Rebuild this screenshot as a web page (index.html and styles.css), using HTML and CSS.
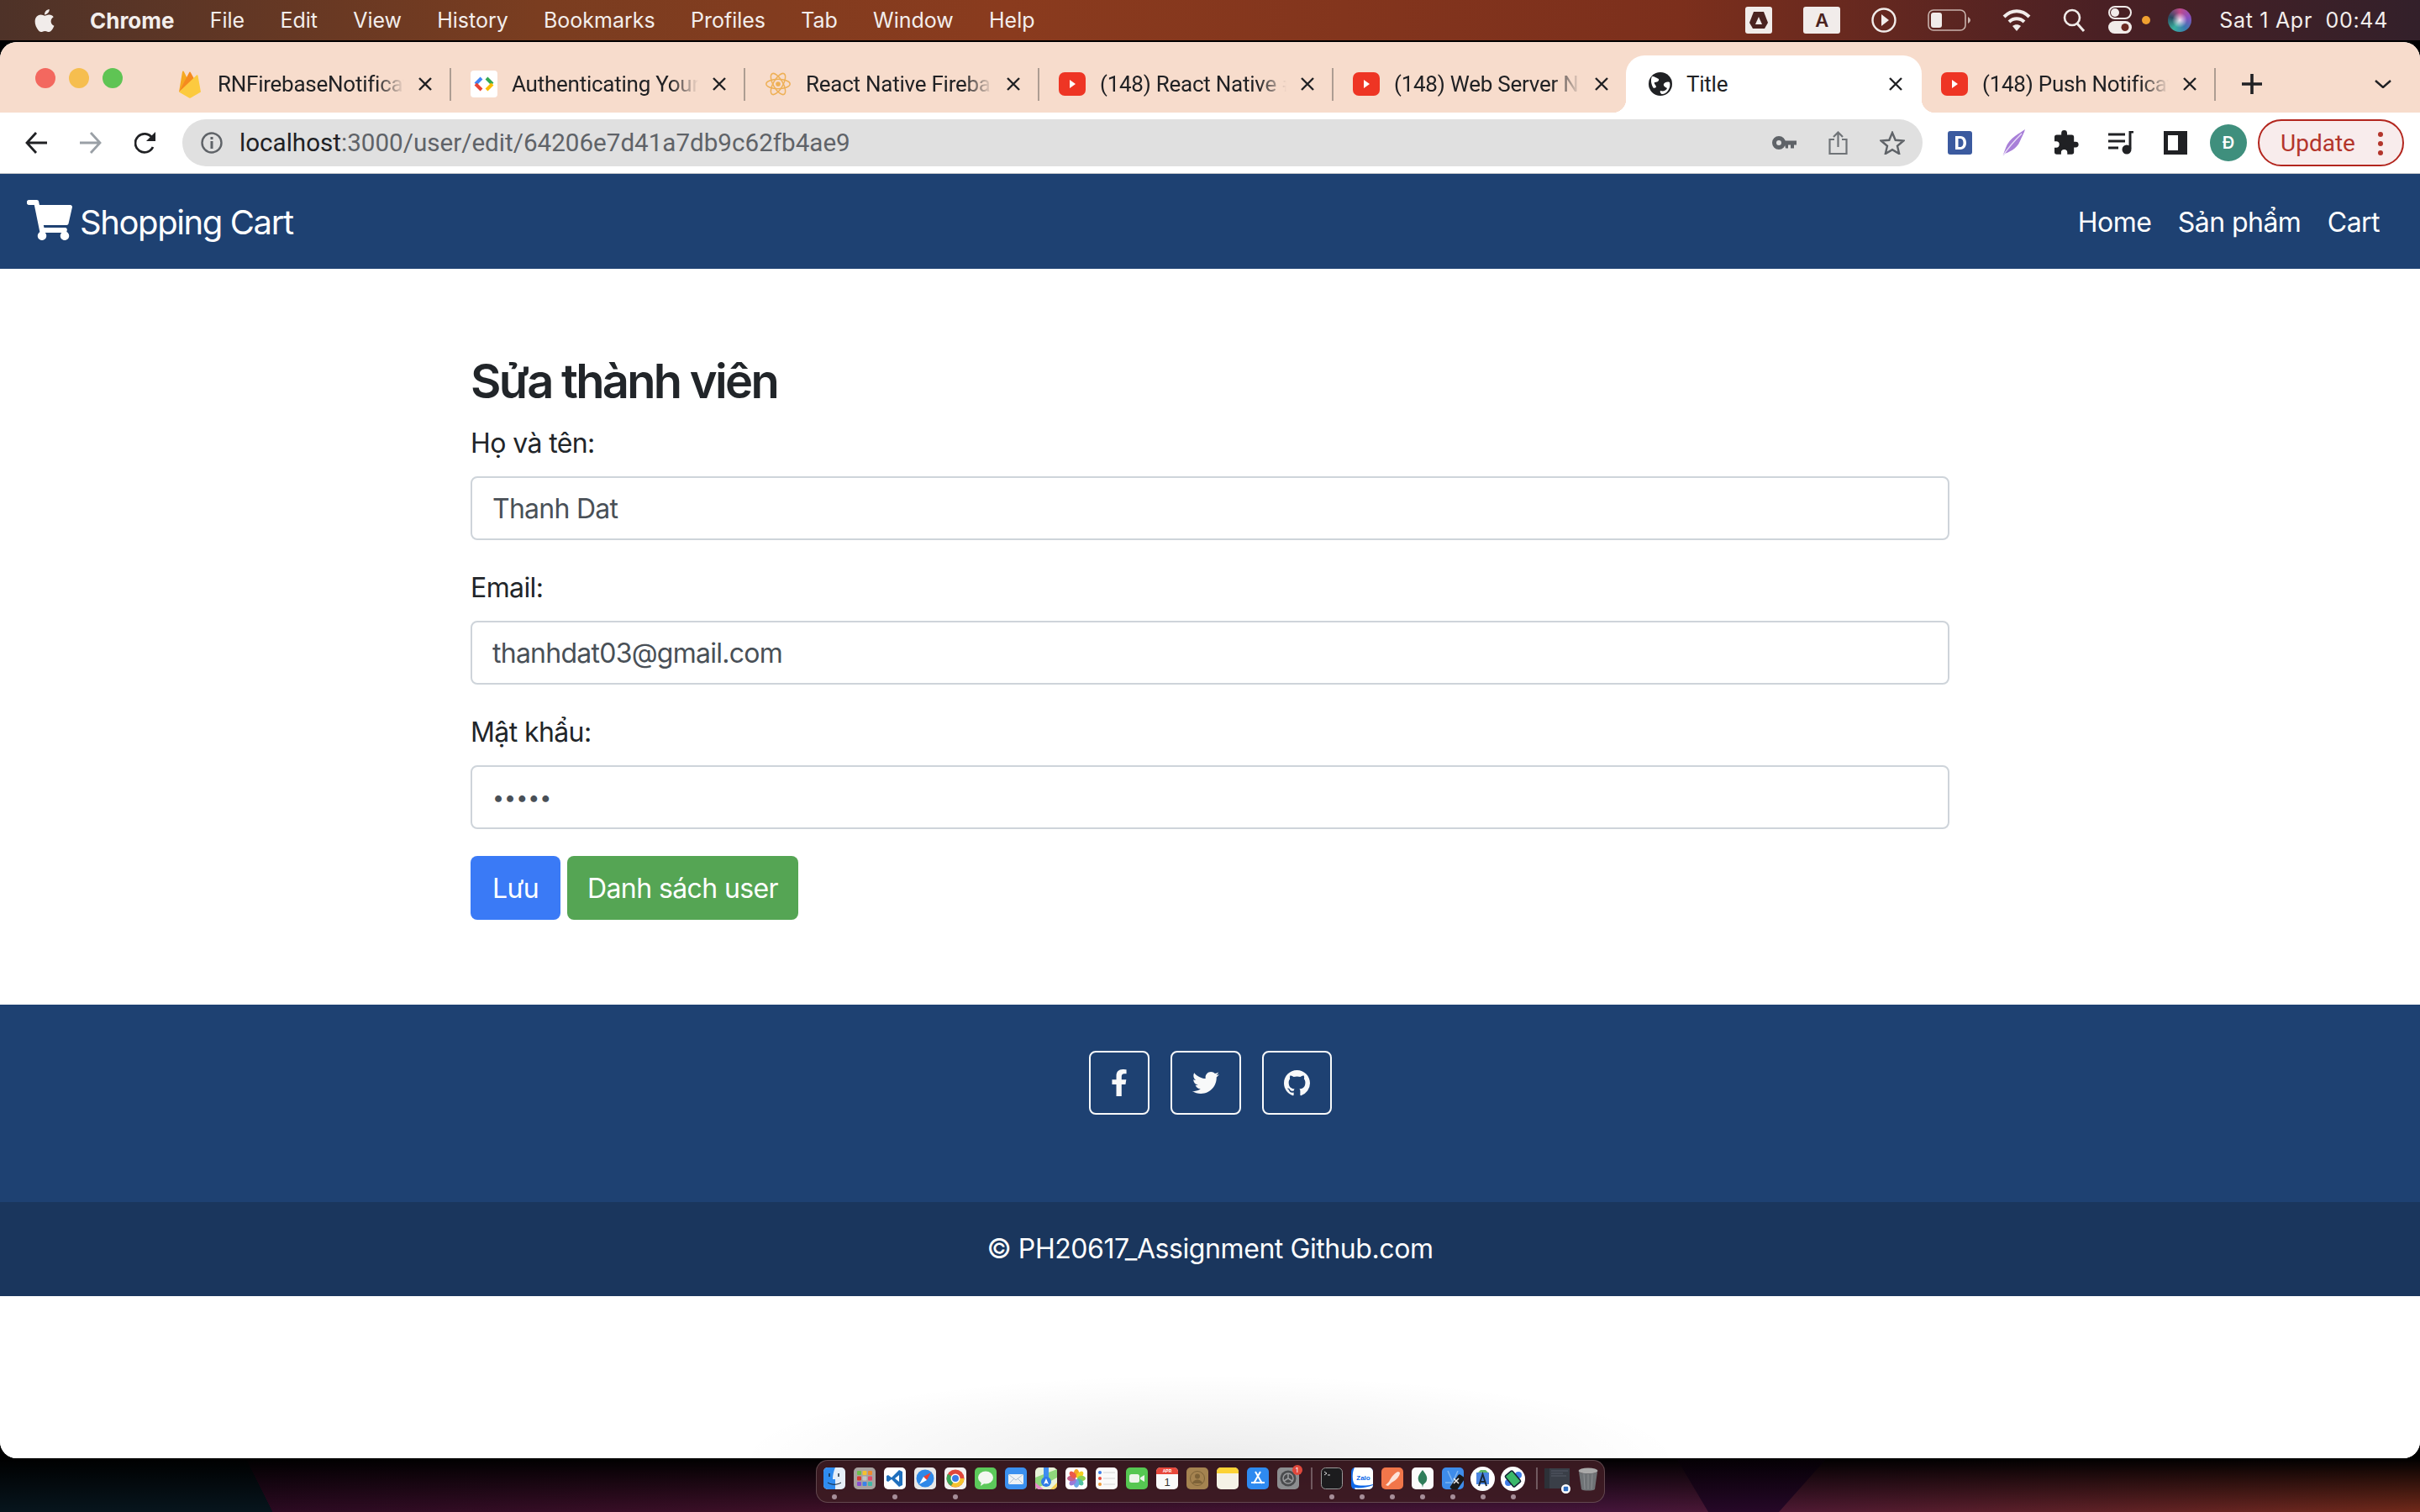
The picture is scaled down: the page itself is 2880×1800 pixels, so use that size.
FILE: index.html
```html
<!DOCTYPE html>
<html lang='vi'>
<head>
  <meta charset='UTF-8'>
  <title>Title</title>
  <link rel="stylesheet" href="styles.css">
</head>
<body>
  <svg class='sprites' width='0' height='0'>
    <symbol id='yt' viewBox='0 0 32 28'>
      <rect width='32' height='28' rx='7' fill='#ee3524'/>
      <path d='M13 9l7 5-7 5z' fill='#fff'/>
    </symbol>
    <symbol id='close' viewBox='0 0 18 18'>
      <path d='M2 2l14 14M16 2L2 16' stroke='#202124' stroke-width='2.4' fill='none'/>
    </symbol>
  </svg>

  <!-- mac menu bar -->
  <div class='menubar'>
    <svg class='apple' viewBox='0 0 384 512'><path fill='#f1ecea' d='M318.7 268.7c-.2-36.7 16.4-64.4 50-84.8-18.8-26.9-47.2-41.7-84.7-44.6-35.5-2.8-74.3 20.7-88.5 20.7-15 0-49.4-19.7-76.4-19.7C63.3 141.2 4 184.8 4 273.5q0 39.3 14.4 81.2c12.8 36.7 59 126.7 107.2 125.2 25.2-.6 43-17.9 75.8-17.9 31.8 0 48.3 17.9 76.4 17.9 48.6-.7 90.4-82.5 102.6-119.3-65.2-30.7-61.7-90-61.7-91.9zm-56.6-164.2c27.3-32.4 24.8-61.9 24-72.5-24.1 1.4-52 16.4-67.9 34.9-17.5 19.8-27.8 44.3-25.6 71.9 26.1 2 49.9-11.4 69.5-34.3z'/></svg>
    <div class='menu'>
      <span class='app-name'>Chrome</span>
      <span>File</span>
      <span>Edit</span>
      <span>View</span>
      <span>History</span>
      <span>Bookmarks</span>
      <span>Profiles</span>
      <span>Tab</span>
      <span>Window</span>
      <span>Help</span>
    </div>
    <div class='status'>
      <svg width='32' height='32' viewBox='0 0 32 32'><rect width='32' height='32' rx='3' fill='#f1ecea'/><path d='M10 6h12l5 13-4 7H9l-4-7z' fill='#4a2320'/><path d='M16 12l4 9h-8z' fill='#f1ecea'/></svg>
      <span class='tile'>A</span>
      <svg width='30' height='32' viewBox='0 0 30 32'><circle cx='15' cy='16' r='13.5' stroke='#f1ecea' stroke-width='2.4' fill='none'/><path d='M12 9l9 7-9 7z' fill='#f1ecea'/></svg>
      <svg width='51' height='26' viewBox='0 0 51 26'><rect x='1' y='1' width='44' height='24' rx='6' stroke='#c9b3ad' stroke-width='1.6' fill='none'/><rect x='4' y='4' width='13' height='18' rx='3' fill='#f1ecea'/><path d='M48 9c2 1 3 3 3 4s-1 3-3 4z' fill='#c9b3ad'/></svg>
      <svg width='36' height='30' viewBox='0 0 36 30'><path d='M3 11c9-9 21-9 30 0M9 17c5-5 13-5 18 0' stroke='#f1ecea' stroke-width='4' fill='none'/><path d='M13 22c3-2.500 7-2.500 10 0l-5 6z' fill='#f1ecea'/></svg>
      <svg class='tight' width='27' height='30' viewBox='0 0 27 30'><circle cx='11' cy='12' r='9' stroke='#f1ecea' stroke-width='2.600' fill='none'/><path d='M17 19l8 9' stroke='#f1ecea' stroke-width='3'/></svg>
      <div class='control'>
        <svg width='28' height='34' viewBox='0 0 28 34'><rect x='1' y='1' width='26' height='14' rx='7' stroke='#f1ecea' stroke-width='2' fill='none'/><circle cx='8' cy='8' r='5' fill='#f1ecea'/><rect y='18' width='28' height='15' rx='7.500' fill='#f1ecea'/><circle cx='20' cy='25.500' r='4.500' fill='#6a2a22'/></svg>
        <i class='mic-dot'></i>
      </div>
      <i class='siri'></i>
      <span class='clock'>Sat 1 Apr&nbsp; 00:44</span>
    </div>
  </div>

  <div class='window'>
    <!-- tabs -->
    <div class='tabstrip'>
      <div class='lights'><i class='red'></i><i class='yellow'></i><i class='green'></i></div>
      <div class='tab'>
        <svg class='tab-icon' viewBox='-3 0 32 33'><path d='M0 26L4 2c.3-1.500 1.500-1.500 2 0l5 10z' fill='#f6a821'/><path d='M0 26L12 3c.6-1.200 1.400-1.200 2 0l5 9z' fill='#f58a1f'/><path d='M0 26L21 6c.6-.6 1.300-.4 1.500.6L26 26l-12 7c-.6.300-1.400.300-2 0z' fill='#fcca3f'/></svg>
        <span class='tab-title'>RNFirebaseNotificat</span>
        <svg class='tab-close'><use href='#close'/></svg>
      </div>
      <div class='tab'>
        <svg class='tab-icon' viewBox='0 0 32 32'><rect width='32' height='32' rx='4' fill='#fff'/><path d='M13 9l-7 7' stroke='#4285f4' stroke-width='4' fill='none'/><path d='M6 16l7 7' stroke='#ea4335' stroke-width='4' fill='none'/><path d='M19 9l7 7' stroke='#34a853' stroke-width='4' fill='none'/><path d='M26 16l-7 7' stroke='#fbbc05' stroke-width='4' fill='none'/></svg>
        <span class='tab-title'>Authenticating Your</span>
        <svg class='tab-close'><use href='#close'/></svg>
      </div>
      <div class='tab'>
        <svg class='tab-icon' viewBox='0 0 32 36'><g stroke='#eeb056' stroke-width='1.600' fill='none'><ellipse cx='16' cy='18' rx='15' ry='6'/><ellipse cx='16' cy='18' rx='15' ry='6' transform='rotate(60 16 18)'/><ellipse cx='16' cy='18' rx='15' ry='6' transform='rotate(120 16 18)'/></g><circle cx='16' cy='18' r='3' fill='#eeb056'/></svg>
        <span class='tab-title'>React Native Fireba</span>
        <svg class='tab-close'><use href='#close'/></svg>
      </div>
      <div class='tab'>
        <svg class='tab-icon'><use href='#yt'/></svg>
        <span class='tab-title'>(148) React Native #</span>
        <svg class='tab-close'><use href='#close'/></svg>
      </div>
      <div class='tab no-sep'>
        <svg class='tab-icon'><use href='#yt'/></svg>
        <span class='tab-title'>(148) Web Server N</span>
        <svg class='tab-close'><use href='#close'/></svg>
      </div>
      <div class='tab active'>
        <svg class='tab-icon' viewBox='0 0 28 28'><circle cx='14' cy='14' r='14' fill='#202124'/><path d='M4 5c4 0 5 2 8 3 1 3-3 4-5 4-1 2 2 3 2 6l-3 1C3 15 2 9 4 5zM25 12c-3-1-6 0-7 2s2 4 4 5c-1 3-5 4-8 3-1 2 1 4 2 4 6 0 11-8 9-14z' fill='#fff'/></svg>
        <span class='tab-title'>Title</span>
        <svg class='tab-close'><use href='#close'/></svg>
      </div>
      <div class='tab'>
        <svg class='tab-icon'><use href='#yt'/></svg>
        <span class='tab-title'>(148) Push Notificat</span>
        <svg class='tab-close'><use href='#close'/></svg>
      </div>
      <svg class='new-tab' viewBox='0 0 24 24'><path d='M12 0v24M0 12h24' stroke='#202124' stroke-width='3.600'/></svg>
      <svg class='tab-list' viewBox='0 0 20 10'><path d='M1 1l9 8 9-8' stroke='#202124' stroke-width='2.400' fill='none'/></svg>
    </div>

    <!-- toolbar -->
    <div class='toolbar'>
      <svg class='tool' viewBox='0 0 26 28'><path d='M26 14H3M13 2L2 14l11 12' stroke='#202124' stroke-width='2.800' fill='none'/></svg>
      <svg class='tool' viewBox='0 0 26 28'><path d='M0 14h23M13 2l11 12-11 12' stroke='#9aa0a6' stroke-width='2.800' fill='none'/></svg>
      <svg class='tool' viewBox='0 0 26 28'><path d='M22 19a11 11 0 1 1-1-11' stroke='#202124' stroke-width='2.800' fill='none'/><path d='M25 1v11H14z' fill='#202124'/></svg>
      <div class='omnibox'>
        <svg class='info' viewBox='0 0 26 26'><circle cx='13' cy='13' r='11.500' stroke='#5f6368' stroke-width='2.400' fill='none'/><rect x='11.500' y='11' width='3' height='9' fill='#5f6368'/><rect x='11.500' y='6' width='3' height='3' fill='#5f6368'/></svg>
        <span class='url'><b>localhost</b>:3000/user/edit/64206e7d41a7db9c62fb4ae9</span>
        <div class='omni-actions'>
          <svg width='29' height='16' viewBox='0 0 29 16'><circle cx='8' cy='8' r='5.500' stroke='#5f6368' stroke-width='5' fill='none'/><path d='M14 5.500h15v5h-3v4h-4v-4h-3v4h-3z' fill='#5f6368'/></svg>
          <svg width='23' height='28' viewBox='0 0 23 28'><path d='M7 10H1.500v17h20V10H16M11.500 19V2M6 7l5.500-5.500L17 7' stroke='#6f7377' stroke-width='2.200' fill='none'/></svg>
          <svg width='30' height='28' viewBox='0 0 30 28'><path d='M15 2l3.700 8.800 9.500.8-7.200 6.200 2.200 9.300L15 22.200l-8.200 4.900L9 17.800 1.800 11.600l9.500-.8z' stroke='#5f6368' stroke-width='2.400' fill='none'/></svg>
        </div>
      </div>
      <div class='extensions'>
        <svg width='29' height='28' viewBox='0 0 29 28'><rect width='29' height='28' rx='3' fill='#3b5a9f'/><path d='M9 6h6c5 0 7 4 7 8s-2 8-7 8H9zM12.500 9v10H15c2.500 0 3.500-2.500 3.500-5s-1-5-3.500-5z' fill='#fff'/></svg>
        <svg width='30' height='32' viewBox='0 0 30 32'><path d='M29 0C24 4 10 10 6 22l-3 8c6-3 16-6 20-16 2-5 5-10 6-14z' fill='#a87fd8'/><path d='M25 5C18 12 10 20 3 31' stroke='#e8dcf7' stroke-width='1.400' fill='none'/></svg>
        <svg width='30' height='30' viewBox='2 1 22 22'><path fill='#202124' d='M20.500 11H19V7a2 2 0 0 0-2-2h-4V3.500a2.500 2.500 0 0 0-5 0V5H4a2 2 0 0 0-2 2v3.800h1.500a2.700 2.700 0 0 1 0 5.400H2V20a2 2 0 0 0 2 2h3.800v-1.500a2.700 2.700 0 0 1 5.400 0V22H17a2 2 0 0 0 2-2v-4h1.500a2.500 2.500 0 0 0 0-5z'/></svg>
        <svg width='32' height='28' viewBox='0 0 32 28'><path d='M0 4h20M0 12h20M0 20h12' stroke='#202124' stroke-width='3'/><path d='M30 1h-4v20' stroke='#202124' stroke-width='3' fill='none'/><circle cx='22' cy='22' r='5.500' fill='#202124'/></svg>
        <svg width='28' height='28' viewBox='0 0 28 28'><rect width='28' height='28' fill='#202124'/><rect x='5' y='5' width='12' height='18' fill='#fff'/></svg>
        <span class='avatar'>Đ</span>
        <div class='update'>
          <span>Update</span>
          <i class='kebab'></i>
        </div>
      </div>
    </div>

    <div class='page'>
      <nav class='navbar'>
        <a class='brand'>
          <svg class='cart' viewBox='0 0 576 512'><path fill='#fff' d='M528.12 301.319l47.273-208C578.806 78.301 567.391 64 551.99 64H159.208l-9.166-44.81C147.758 8.021 137.93 0 126.529 0H24C10.745 0 0 10.745 0 24v16c0 13.255 10.745 24 24 24h69.883l70.248 343.435C147.325 417.1 136 435.222 136 456c0 30.928 25.072 56 56 56s56-25.072 56-56c0-15.674-6.447-29.835-16.824-40h209.647C430.447 426.165 424 440.326 424 456c0 30.928 25.072 56 56 56s56-25.072 56-56c0-22.172-12.888-41.332-31.579-50.405l5.517-24.276c3.413-15.018-8.002-29.319-23.403-29.319H218.117l-6.545-32h293.145c11.206 0 20.92-7.754 23.403-18.681z'/></svg>
          Shopping Cart
        </a>
        <div class='nav-links'>
          <a>Home</a>
          <a>Sản phẩm</a>
          <a>Cart</a>
        </div>
      </nav>

      <main class='container'>
        <h2>Sửa thành viên</h2>
        <form class='user-form'>
          <div class='form-group'>
            <label for='name'>Họ và tên:</label>
            <input id='name' type='text' value='Thanh Dat'>
          </div>
          <div class='form-group'>
            <label for='email'>Email:</label>
            <input id='email' type='text' value='thanhdat03@gmail.com'>
          </div>
          <div class='form-group'>
            <label for='password'>Mật khẩu:</label>
            <input id='password' class='password' type='password' value='12345'>
          </div>
          <div class='form-buttons'>
            <button class='btn btn-save' type='button'>Lưu</button>
            <button class='btn btn-list' type='button'>Danh sách user</button>
          </div>
        </form>
      </main>

      <footer class='footer'>
        <div class='socials'>
          <a class='social'><svg width='20' height='32' viewBox='0 0 320 512'><path fill='#f8f9fa' d='M279.14 288l14.22-92.66h-88.91v-60.13c0-25.35 12.42-50.06 52.24-50.06h40.42V6.26S260.43 0 225.36 0c-73.22 0-121.08 44.38-121.08 124.72v70.62H22.89V288h81.39v224h100.17V288z'/></svg></a>
          <a class='social'><svg width='32' height='32' viewBox='0 0 512 512'><path fill='#f8f9fa' d='M459.37 151.716c.325 4.548.325 9.097.325 13.645 0 138.72-105.583 298.558-298.558 298.558-59.452 0-114.68-17.219-161.137-47.106 8.447.974 16.568 1.299 25.34 1.299 49.055 0 94.213-16.568 130.274-44.832-46.132-.975-84.792-31.188-98.112-72.772 6.498.974 12.995 1.624 19.818 1.624 9.421 0 18.843-1.3 27.614-3.573-48.081-9.747-84.143-51.98-84.143-102.985v-1.299c13.969 7.797 30.214 12.67 47.431 13.319-28.264-18.843-46.781-51.005-46.781-87.391 0-19.492 5.197-37.36 14.294-52.954 51.655 63.675 129.3 105.258 216.365 109.807-1.624-7.797-2.599-15.918-2.599-24.04 0-57.828 46.782-104.934 104.934-104.934 30.213 0 57.502 12.67 76.67 33.137 23.715-4.548 46.456-13.32 66.599-25.34-7.798 24.366-24.366 44.833-46.132 57.827 21.117-2.273 41.584-8.122 60.426-16.243-14.292 20.791-32.161 39.308-52.628 54.253z'/></svg></a>
          <a class='social'><svg width='31' height='31' viewBox='0 0 16 16'><path fill='#f8f9fa' d='M8 0C3.58 0 0 3.58 0 8c0 3.54 2.29 6.53 5.47 7.59.4.07.55-.17.55-.38 0-.19-.01-.82-.01-1.49-2.01.37-2.53-.49-2.69-.94-.09-.23-.48-.94-.82-1.13-.28-.15-.68-.52-.01-.53.63-.01 1.08.58 1.23.82.72 1.21 1.87.87 2.33.66.07-.52.28-.87.51-1.07-1.78-.2-3.64-.89-3.64-3.95 0-.87.31-1.59.82-2.15-.08-.2-.36-1.02.08-2.12 0 0 .67-.21 2.2.82.64-.18 1.32-.27 2-.27.68 0 1.36.09 2 .27 1.53-1.04 2.2-.82 2.2-.82.44 1.1.16 1.92.08 2.12.51.56.82 1.27.82 2.15 0 3.07-1.87 3.75-3.65 3.95.29.25.54.73.54 1.48 0 1.07-.01 1.93-.01 2.2 0 .21.15.46.55.38A8.013 8.013 0 0016 8c0-4.42-3.58-8-8-8z'/></svg></a>
        </div>
        <div class='copyright'>© PH20617_Assignment Github.com</div>
      </footer>
    </div>
  </div>

  <!-- dock -->
  <div class='dock'>
    <div class='dock-item on'><svg viewBox='0 0 26 26'><rect width='26' height='26' rx='5' fill='#e6eef8'/><path d='M5 0h9c-2 5-3 9-3 14h3v12H5a5 5 0 0 1-5-5V5a5 5 0 0 1 5-5z' fill='#2f8cf0'/><path d='M7 7v4M18 7v4' stroke='#123' stroke-width='1.400'/><path d='M5 18c5 3 11 3 16 0' stroke='#123' stroke-width='1' fill='none'/></svg></div>
    <div class='dock-item'><svg viewBox='0 0 26 26'><rect width='26' height='26' rx='5' fill='#a8a3a0'/><g><rect x='4' y='4' width='5' height='5' rx='1' fill='#6bc04b'/><rect x='10.500' y='4' width='5' height='5' rx='1' fill='#f5c02e'/><rect x='17' y='4' width='5' height='5' rx='1' fill='#ef8a2e'/><rect x='4' y='10.500' width='5' height='5' rx='1' fill='#d83a30'/><rect x='10.500' y='10.500' width='5' height='5' rx='1' fill='#bfc3c6'/><rect x='17' y='10.500' width='5' height='5' rx='1' fill='#e24a6a'/><rect x='4' y='17' width='5' height='5' rx='1' fill='#8a4fd0'/><rect x='10.500' y='17' width='5' height='5' rx='1' fill='#3a82ea'/><rect x='17' y='17' width='5' height='5' rx='1' fill='#42b8a8'/></g></svg></div>
    <div class='dock-item on'><svg viewBox='0 0 26 26'><rect width='26' height='26' rx='5' fill='#fff'/><path d='M18 3l4 2v16l-4 2-9-9-4 3-2-1v-6l2-1 4 3zm0 6l-5 4 5 4z' fill='#1f6fbd'/></svg></div>
    <div class='dock-item'><svg viewBox='0 0 26 26'><rect width='26' height='26' rx='5' fill='#e8e8e8'/><circle cx='13' cy='13' r='10.500' fill='#2f88e8'/><path d='M20 6l-9 5 4 4z' fill='#f04030'/><path d='M6 20l5-9 4 4z' fill='#fff'/></svg></div>
    <div class='dock-item on'><svg viewBox='0 0 26 26'><rect width='26' height='26' rx='5' fill='#f2f2f2'/><circle cx='13' cy='13' r='10.500' fill='#e0483c'/><path d='M13 13L23.500 13a10.500 10.500 0 0 1-15.700 9.100z' fill='#f5c330'/><path d='M13 13L7.800 22.100A10.500 10.500 0 0 1 4 7.700z' fill='#3aa757'/><circle cx='13' cy='13' r='5.500' fill='#fff'/><circle cx='13' cy='13' r='4' fill='#3b7de8'/></svg></div>
    <div class='dock-item'><svg viewBox='0 0 26 26'><rect width='26' height='26' rx='5' fill='#5cc95a'/><ellipse cx='13' cy='12' rx='9' ry='7.500' fill='#f2f7f0'/><path d='M8 17l-1 5 6-4z' fill='#f2f7f0'/></svg></div>
    <div class='dock-item'><svg viewBox='0 0 26 26'><rect width='26' height='26' rx='5' fill='#3b90f0'/><rect x='4' y='8' width='18' height='12' rx='1' fill='#eef2f6'/><path d='M4 8l9 7 9-7M4 20l7-7M22 20l-7-7' stroke='#9fb3c8' stroke-width='.8' fill='none'/></svg></div>
    <div class='dock-item'><svg viewBox='0 0 26 26'><rect width='26' height='26' rx='5' fill='#e9f3d8'/><path d='M0 12l26-10v10L0 26z' fill='#8fd67c'/><path d='M0 18l10 8H5a5 5 0 0 1-5-5z' fill='#e888c8'/><path d='M18 26l8-8v3a5 5 0 0 1-5 5z' fill='#f5cf50'/><rect x='10' y='0' width='6' height='14' fill='#3f8df0'/><circle cx='13' cy='17' r='6' fill='#2f7de8'/><path d='M13 13l3 7-3-1.500-3 1.500z' fill='#fff'/></svg></div>
    <div class='dock-item'><svg viewBox='0 0 26 26'><rect width='26' height='26' rx='5' fill='#fff'/><g transform='translate(13 13)'><ellipse cy='-6' rx='3.200' ry='5' fill='#f5a623'/><ellipse cy='-6' rx='3.200' ry='5' fill='#f5d020' transform='rotate(45)'/><ellipse cy='-6' rx='3.200' ry='5' fill='#8fcf50' transform='rotate(90)'/><ellipse cy='-6' rx='3.200' ry='5' fill='#50c0a0' transform='rotate(135)'/><ellipse cy='-6' rx='3.200' ry='5' fill='#6aa8e8' transform='rotate(180)'/><ellipse cy='-6' rx='3.200' ry='5' fill='#9a7ad8' transform='rotate(225)'/><ellipse cy='-6' rx='3.200' ry='5' fill='#c8608a' transform='rotate(270)'/><ellipse cy='-6' rx='3.200' ry='5' fill='#ec5a4a' transform='rotate(315)'/></g></svg></div>
    <div class='dock-item'><svg viewBox='0 0 26 26'><rect width='26' height='26' rx='5' fill='#fafafa'/><circle cx='5' cy='6' r='2' fill='#3b7de8'/><circle cx='5' cy='13' r='2' fill='#e8483c'/><circle cx='5' cy='20' r='2' fill='#ef9a3a'/><path d='M9 6h14M9 13h14M9 20h14' stroke='#ccc' stroke-width='.8'/></svg></div>
    <div class='dock-item'><svg viewBox='0 0 26 26'><rect width='26' height='26' rx='5' fill='#56c752'/><rect x='4' y='8' width='12' height='10' rx='2.500' fill='#eef5ec'/><path d='M17 12l5-3v8l-5-3z' fill='#eef5ec'/></svg></div>
    <div class='dock-item'><svg viewBox='0 0 26 26'><rect width='26' height='26' rx='5' fill='#fafafa'/><path d='M0 8V5a5 5 0 0 1 5-5h16a5 5 0 0 1 5 5v3z' fill='#e8483c'/><text x='13' y='6' class='cal-month'>APR</text><text x='13' y='22' class='cal-day'>1</text></svg></div>
    <div class='dock-item'><svg viewBox='0 0 26 26'><rect width='26' height='26' rx='5' fill='#a58350'/><circle cx='13' cy='13' r='8.500' stroke='#7d6238' stroke-width='1' fill='none'/><circle cx='13' cy='10.500' r='3' fill='#7d6238'/><path d='M7 19c1-6 11-6 12 0z' fill='#7d6238'/></svg></div>
    <div class='dock-item'><svg viewBox='0 0 26 26'><rect width='26' height='26' rx='5' fill='#f5f2e6'/><path d='M0 7V5a5 5 0 0 1 5-5h16a5 5 0 0 1 5 5v2z' fill='#fcd234'/></svg></div>
    <div class='dock-item'><svg viewBox='0 0 26 26'><rect width='26' height='26' rx='5' fill='#2e8af0'/><path d='M16 5L8 19M10 5l8 14M5 18h16' stroke='#fff' stroke-width='2' fill='none'/></svg></div>
    <div class='dock-item'><svg viewBox='0 0 26 26'><rect width='26' height='26' rx='5' fill='#8c8e90'/><circle cx='13' cy='13' r='9.500' fill='#4a4c4e'/><circle cx='13' cy='13' r='6' stroke='#9a9c9e' stroke-width='1.500' fill='none'/><path d='M13 13V7M13 13l5 3M13 13l-5 3' stroke='#9a9c9e' stroke-width='1.500'/></svg><span class='dock-badge'>1</span></div>
    <i class='dock-sep'></i>
    <div class='dock-item on'><svg viewBox='0 0 26 26'><rect x='.5' y='.5' width='25' height='25' rx='5' fill='#1c1c1e' stroke='#9a9a9a'/><path d='M4 5l3 2-3 2M8 9h3' stroke='#eee' stroke-width='.9' fill='none'/></svg></div>
    <div class='dock-item on'><svg viewBox='0 0 26 26'><rect width='26' height='26' rx='5' fill='#0f68e8'/><path d='M4 0h17a5 5 0 0 1 5 5v16a5 5 0 0 1-5 5H5l-1-2c5 1 15 0 22-3V20c-8 2-17 2-22 0C1 16 1 5 4 0z' fill='#fff'/><text x='14.500' y='15' class='zalo'>Zalo</text></svg></div>
    <div class='dock-item on'><svg viewBox='0 0 26 26'><rect width='26' height='26' rx='5' fill='#f1764a'/><path d='M20 5c-4 1-8 6-11 12l-4 4 3 1 4-4c6-3 10-8 10-12z' fill='#fde3d8'/></svg></div>
    <div class='dock-item on'><svg viewBox='0 0 26 26'><rect width='26' height='26' rx='5' fill='#fbfbfb'/><path d='M13 3c4 5 6 8 5 12-.6 3-3 4-4.300 5.500L13 24l-.7-3.500C11 19 8.600 18 8 15 7 11 9 8 13 3z' fill='#2f7d5a'/></svg></div>
    <div class='dock-item on'><svg viewBox='0 0 26 26'><rect width='26' height='26' rx='5' fill='#3e8cea'/><path d='M7 4l8 18M19 4l-8 18M4 18h18' stroke='#7fb6f2' stroke-width='1.500'/><rect x='14' y='8' width='9' height='20' rx='2' fill='#1a1a1a' transform='rotate(35 18 18)'/><path d='M14 13l6 6M20 13l-6 6' stroke='#eee' stroke-width='1.500'/></svg></div>
    <div class='dock-item on wide'><svg viewBox='0 0 29 29'><circle cx='14.500' cy='14.500' r='14.500' fill='#fff'/><rect x='7' y='7' width='15' height='14' fill='#4a85e0'/><path d='M9 7l3-3h6l3 3z' fill='#5fb96a'/><path d='M10 23l4.500-14L19 23M12 18h5' stroke='#1a2a3a' stroke-width='2' fill='none'/></svg></div>
    <div class='dock-item on wide'><svg viewBox='0 0 29 29'><circle cx='14.500' cy='14.500' r='14.500' fill='#fff'/><circle cx='9' cy='19' r='4' fill='#3f7de8'/><circle cx='21' cy='10' r='4' fill='#3f7de8'/><rect x='9' y='6' width='11' height='17' rx='1.500' fill='#3ab86a' stroke='#123' stroke-width='1.500' transform='rotate(-40 14.500 14.500)'/></svg></div>
    <i class='dock-sep'></i>
    <div class='dock-thumb'><svg width='30' height='24' viewBox='0 0 30 24'><rect width='30' height='24' fill='#3a3f48'/><rect width='6' height='24' fill='#2d3138'/><path d='M8 3h20M8 6h14M8 9h18' stroke='#555b66'/></svg><svg class='thumb-badge' viewBox='0 0 12 12'><circle cx='6' cy='6' r='6' fill='#fff'/><rect x='3' y='3' width='6' height='6' rx='1' fill='#2f6fc0'/></svg></div>
    <div class='dock-trash'><svg width='24' height='28' viewBox='0 0 24 28'><ellipse cx='12' cy='4' rx='11.500' ry='3.500' fill='#a9a9a9'/><path d='M1 5l3 21c2 2 14 2 16 0l3-21c-4 3-18 3-22 0z' fill='#6f7376'/><path d='M7 8l1 18M12 8v18M17 8l-1 18' stroke='#94979a' stroke-width='.8'/></svg></div>
  </div>
  <i class='wedge'></i>
</body>
</html>
```

FILE: styles.css
```css
* {
  box-sizing: border-box;
}

html, body {
  margin: 0;
  height: 1800px;
  overflow: hidden;
}

body {
  position: relative;
  font-family: Inter, "Noto Sans", sans-serif;
  color: #212529;
  background:
    linear-gradient(to bottom, #000 1736px, rgba(0, 0, 0, 0) 1800px),
    linear-gradient(63.4deg, #07151d 290px, #2c0a22 290px, #3e1028 858px, #45153a 1716px, #70291a 2574px);
}

.sprites {
  position: absolute;
}

/* menu bar */
.menubar {
  height: 48px;
  display: flex;
  align-items: center;
  padding: 0 38px 0 40px;
  color: #f3eeec;
  font-size: 25px;
  background: linear-gradient(to right, #4e3228 0, #7a3d20 640px, #8a3b1e 1200px, #7c2f1c 2000px, #4a2024 2500px, #33202a 2880px);
}

.apple {
  width: 26px;
  height: 31px;
  margin-right: 41px;
}

.menu {
  display: flex;
  gap: 42.200px;
}

.app-name {
  font-size: 26px;
  font-weight: 700;
}

.status {
  margin-left: auto;
  display: flex;
  align-items: center;
  gap: 37px;
}

.tile {
  width: 44px;
  height: 32px;
  border-radius: 3px;
  background: #f1ecea;
  color: #4a2320;
  font-size: 22px;
  font-weight: 600;
  text-align: center;
  line-height: 32px;
}

.tight {
  margin-right: -10px;
}

.control {
  display: flex;
  align-items: center;
  gap: 12px;
}

.mic-dot {
  width: 10px;
  height: 10px;
  border-radius: 50%;
  background: #f0a030;
}

.siri {
  width: 28px;
  height: 28px;
  margin-left: -16px;
  border-radius: 50%;
  background:
    radial-gradient(circle, #f0e0f0 0, rgba(240, 224, 240, 0) 45%),
    conic-gradient(#c04a8a, #8a4fc0, #3a7ab0, #3ab0a0, #2a4a60, #c04a8a);
}

.clock {
  margin-left: -4px;
  letter-spacing: 0.700px;
}

/* browser window */
.window {
  position: relative;
  margin-top: 2px;
  height: 1686px;
  border-radius: 20px;
  overflow: hidden;
  display: flex;
  flex-direction: column;
  background: #fff;
}

/* shadow the dock drops on the window */
.window::after {
  content: '';
  position: absolute;
  left: 880px;
  width: 1120px;
  bottom: -100px;
  height: 200px;
  background: radial-gradient(closest-side, rgba(0, 0, 0, 0.075), rgba(0, 0, 0, 0));
  pointer-events: none;
}

.tabstrip {
  height: 84px;
  flex: none;
  display: flex;
  align-items: flex-end;
  padding-left: 187px;
  position: relative;
  background: #f7dccc;
}

.lights {
  position: absolute;
  left: 42px;
  top: 31px;
  display: flex;
  gap: 16px;
}

.lights i {
  width: 24px;
  height: 24px;
  border-radius: 50%;
}

.lights .red { background: #f3685f; }
.lights .yellow { background: #f6be4f; }
.lights .green { background: #5fc454; }

.tab {
  position: relative;
  width: 350px;
  height: 68px;
  display: flex;
  align-items: center;
  padding: 0 0 0 23px;
}

.tab::before {
  content: '';
  position: absolute;
  right: 0;
  top: 15px;
  height: 39px;
  width: 2px;
  background: #ad9d92;
}

.tab.no-sep::before,
.tab.active::before {
  display: none;
}

.tab-icon {
  width: 32px;
  height: 34px;
  flex: none;
}

.tab-title {
  margin-left: 17px;
  width: 222px;
  flex: none;
  white-space: nowrap;
  font-family: Roboto, sans-serif;
  font-size: 26px;
  letter-spacing: -0.250px;
  color: #202124;
  -webkit-mask-image: linear-gradient(to right, #000 85%, transparent);
  mask-image: linear-gradient(to right, #000 85%, transparent);
}

.tab-close {
  width: 18px;
  height: 18px;
  margin-left: 16px;
  flex: none;
}

.tab.active {
  width: 352px;
  margin-left: -2px;
  padding-left: 27px;
  background: #fff;
  border-radius: 22px 22px 0 0;
  z-index: 1;
}

.tab.active .tab-icon {
  width: 28px;
  height: 28px;
}

.tab.active .tab-title {
  -webkit-mask-image: none;
  mask-image: none;
}

.tab.active .tab-close {
  margin-left: 18px;
}

/* the curved feet of the active tab */
.tab.active::after {
  content: '';
  position: absolute;
  left: -16px;
  right: -16px;
  bottom: 0;
  height: 16px;
  z-index: -1;
  background:
    radial-gradient(circle at 0 0, #f7dccc 16px, #fff 16.500px) left / 16px 16px no-repeat,
    radial-gradient(circle at 100% 0, #f7dccc 16px, #fff 16.500px) right / 16px 16px no-repeat;
}

.new-tab {
  width: 24px;
  height: 24px;
  margin: 0 0 22px 31px;
}

.tab-list {
  width: 20px;
  height: 10px;
  margin: 0 0 29px 134px;
}

.toolbar {
  height: 73px;
  flex: none;
  display: flex;
  align-items: center;
  gap: 39px;
  padding: 0 17px 1px 30px;
  background: #fff;
  border-bottom: 1px solid #c6c9cc;
}

.tool {
  width: 26px;
  height: 28px;
  flex: none;
}

.omnibox {
  width: 2071px;
  height: 56px;
  margin-left: -8px;
  flex: none;
  display: flex;
  align-items: center;
  padding: 0 21px 0 22px;
  border-radius: 28px;
  background: #e0e0e0;
}

.info {
  width: 26px;
  height: 26px;
}

.url {
  margin-left: 20px;
  font-family: Roboto, sans-serif;
  font-size: 29.600px;
  color: #5f6368;
}

.url b {
  font-weight: 400;
  color: #202124;
}

.omni-actions {
  margin-left: auto;
  display: flex;
  align-items: center;
  gap: 38px;
}

.extensions {
  margin-left: -9px;
  display: flex;
  align-items: center;
  gap: 34px;
}

.avatar {
  width: 44px;
  height: 44px;
  margin-left: -7px;
  border-radius: 50%;
  background: #3f8f7d;
  color: #fff;
  font-size: 20px;
  font-weight: 600;
  text-align: center;
  line-height: 44px;
}

.update {
  width: 174px;
  height: 56px;
  margin-left: -21px;
  display: flex;
  align-items: center;
  padding: 2px 0 0 25px;
  border: 2px solid #b3261e;
  border-radius: 28px;
  background: #f8ecec;
  color: #b3352b;
  font-family: Roboto, sans-serif;
  font-size: 28px;
}

.kebab {
  width: 6px;
  height: 6px;
  margin-left: 27px;
  border-radius: 50%;
  background: #b3352b;
  box-shadow: 0 -11px 0 #b3352b, 0 11px 0 #b3352b;
}

/* page */
.page {
  flex: 1;
  background: #fff;
}

.navbar {
  height: 113px;
  display: flex;
  align-items: center;
  justify-content: space-between;
  padding: 2px 48px 0 32px;
  background: #1e4172;
  color: #fff;
  font-size: 32px;
}

.brand {
  display: flex;
  align-items: center;
  gap: 9px;
  font-size: 40px;
  letter-spacing: -1.400px;
}

.cart {
  width: 54px;
  height: 48px;
  margin-top: -6px;
}

.nav-links {
  display: flex;
  gap: 31.500px;
  letter-spacing: -0.550px;
}

.container {
  width: 1760px;
  margin: 0 auto;
  padding: 90px 0 101px;
}

h2 {
  margin: 0 0 10px;
  padding-top: 6px;
  font-size: 56px;
  font-weight: 600;
  line-height: 77px;
  letter-spacing: -2.700px;
}

.form-group {
  margin-bottom: 32px;
}

label {
  display: block;
  margin-bottom: 15px;
  font-size: 32px;
  line-height: 49px;
  letter-spacing: -0.600px;
}

input {
  display: block;
  width: 100%;
  height: 76px;
  padding: 12px 24px;
  border: 2px solid #ced4da;
  border-radius: 8px;
  font-family: Inter, sans-serif;
  font-size: 32px;
  letter-spacing: -0.750px;
  color: #495057;
}

.password {
  font-size: 25px;
  letter-spacing: 0;
}

.form-buttons {
  display: flex;
  gap: 8px;
}

.btn {
  height: 76px;
  padding: 0 24px;
  border: 0;
  border-radius: 8px;
  color: #fff;
  font-family: Inter, sans-serif;
  font-size: 32px;
  letter-spacing: -0.600px;
}

.btn-save {
  min-width: 107px;
  background: #3a7af6;
}

.btn-list {
  background: #55a554;
}

.footer {
  color: #fff;
}

.socials {
  height: 235px;
  display: flex;
  justify-content: center;
  align-items: flex-start;
  gap: 25px;
  padding-top: 55px;
  background: #1e4172;
}

.social {
  height: 76px;
  padding: 0 24px;
  display: flex;
  align-items: center;
  border: 2px solid #f8f9fa;
  border-radius: 8px;
}

.copyright {
  height: 112px;
  background: #1a365d;
  font-size: 32px;
  letter-spacing: -0.420px;
  line-height: 112px;
  text-align: center;
}

/* dock */
.dock {
  position: relative;
  width: 939px;
  height: 51px;
  margin: 2px auto 0;
  padding: 8px 0 0 8px;
  display: flex;
  gap: 10px;
  border: 1px solid rgba(255, 255, 255, 0.2);
  border-radius: 14px;
  background: rgba(62, 28, 36, 0.9);
}

.dock-item {
  position: relative;
  width: 26px;
  height: 26px;
  flex: none;
}

.dock-item > svg {
  display: block;
  width: 100%;
  height: 100%;
}

.dock-item.on::after {
  content: '';
  position: absolute;
  left: 10px;
  top: 32px;
  width: 6px;
  height: 6px;
  border-radius: 50%;
  background: #a58d98;
}

.dock-item.wide {
  width: 29px;
  height: 29px;
  margin: -1px -1.500px 0;
}

.dock-item.wide::after {
  left: 11.500px;
  top: 33px;
}

.dock-badge {
  position: absolute;
  right: -4px;
  top: -3px;
  width: 12px;
  height: 12px;
  border-radius: 50%;
  background: #e0483c;
  color: #fff;
  font-size: 8px;
  line-height: 12px;
  text-align: center;
}

.dock-sep {
  width: 2px;
  height: 26px;
  margin: 0 0 0 4px;
  flex: none;
  background: #70595f;
}

.dock-thumb {
  position: relative;
  width: 30px;
  height: 24px;
  margin-top: 1px;
  margin-left: -2px;
  flex: none;
}

.thumb-badge {
  position: absolute;
  right: -1px;
  bottom: -6px;
  width: 11px;
  height: 11px;
}

.dock-trash {
  flex: none;
}

.cal-month {
  font-family: "Liberation Sans", sans-serif;
  font-size: 5px;
  font-weight: 700;
  fill: #fff;
  text-anchor: middle;
}

.cal-day {
  font-family: "Liberation Sans", sans-serif;
  font-size: 13px;
  fill: #333;
  text-anchor: middle;
}

.zalo {
  font-family: "Liberation Sans", sans-serif;
  font-size: 8px;
  font-weight: 700;
  fill: #0f68e8;
  text-anchor: middle;
}

.wedge {
  position: absolute;
  left: 1995px;
  bottom: 0;
  width: 179px;
  height: 64px;
  background: linear-gradient(to bottom, #040004, #260828);
  clip-path: polygon(0 0, 100% 0, 122px 100%, 38px 100%);
}
```
